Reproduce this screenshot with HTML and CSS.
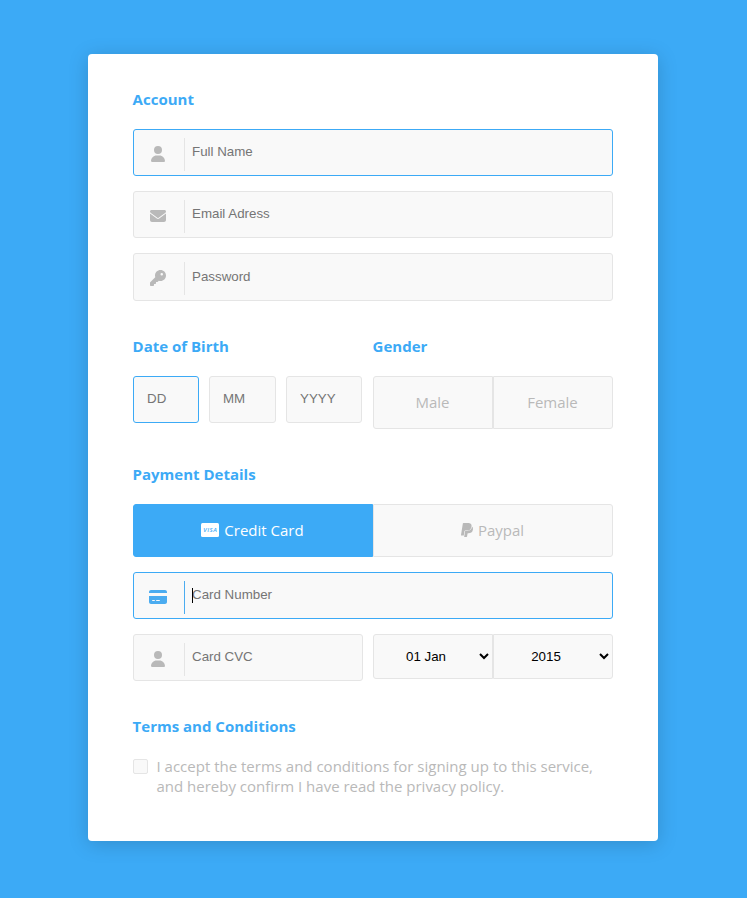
FILE: index.html
```html
<!DOCTYPE html>
<html lang="en">
<head>
<meta charset="utf-8">
<title>Sign up</title>
<link rel="stylesheet" href="styles.css">
</head>
<body>
<svg class="sprite" aria-hidden="true">
  <symbol id="user" viewBox="0 0 448 512"><path d="M224 256A128 128 0 1 0 224 0a128 128 0 1 0 0 256zm-45.700 48C79.800 304 0 383.800 0 482.300C0 498.700 13.300 512 29.700 512l388.600 0c16.400 0 29.700-13.300 29.700-29.700C448 383.800 368.200 304 269.700 304l-91.400 0z"/></symbol>
</svg>
<main class="card">
  <form>
    <section class="account">
      <h4>Account</h4>
      <div class="field active-border">
        <span class="icon"><svg width="14" height="16"><use href="#user"/></svg></span>
        <input type="text" placeholder="Full Name">
      </div>
      <div class="field">
        <span class="icon"><svg width="16" height="16" viewBox="0 0 512 512"><path d="M48 64C21.500 64 0 85.500 0 112c0 15.100 7.100 29.300 19.200 38.400L236.800 313.600c11.400 8.500 27 8.500 38.400 0L492.800 150.400c12.100-9.100 19.200-23.300 19.200-38.400c0-26.500-21.500-48-48-48L48 64zM0 176L0 384c0 35.300 28.700 64 64 64l384 0c35.300 0 64-28.700 64-64l0-208L294.400 339.200c-22.800 17.100-54 17.100-76.800 0L0 176z"/></svg></span>
        <input type="email" placeholder="Email Adress">
      </div>
      <div class="field tall">
        <span class="icon"><svg width="16" height="16" viewBox="0 0 512 512"><path d="M336 352c97.200 0 176-78.800 176-176S433.200 0 336 0S160 78.800 160 176c0 18.700 2.900 36.800 8.300 53.700L7 391c-4.500 4.500-7 10.600-7 17l0 80c0 13.300 10.700 24 24 24l80 0c13.300 0 24-10.700 24-24l0-40 40 0c13.300 0 24-10.700 24-24l0-40 40 0c6.400 0 12.500-2.500 17-7l33.300-33.300c16.900 5.400 35 8.300 53.700 8.300zM376 96a40 40 0 1 1 0 80 40 40 0 1 1 0-80z"/></svg></span>
        <input type="password" placeholder="Password">
      </div>
    </section>

    <section class="halves">
      <div>
        <h4>Date of Birth</h4>
        <div class="birth">
          <input class="active-border" type="text" placeholder="DD">
          <input type="text" placeholder="MM">
          <input type="text" placeholder="YYYY">
        </div>
      </div>
      <div>
        <h4>Gender</h4>
        <div class="switch">
          <label>Male</label>
          <label>Female</label>
        </div>
      </div>
    </section>

    <section class="payment">
      <h4>Payment Details</h4>
      <div class="switch methods">
        <label class="selected"><svg width="18" height="16" viewBox="0 0 18 16"><rect y="1" width="18" height="14" rx="1.500" fill="#fff"/><text class="visa" x="9" y="10.200" text-anchor="middle" textLength="13.500">VISA</text></svg><span>Credit Card</span></label>
        <label><svg width="12" height="16" viewBox="0 0 384 512"><path d="M111.400 295.900c-3.500 19.200-17.400 108.700-21.500 134-.300 1.800-1 2.500-3 2.500H12.300c-7.600 0-13.100-6.600-12.100-13.900L58.800 46.600c1.500-9.600 10.100-16.900 20-16.900 152.300 0 165.100-3.700 204 11.400 60.100 23.300 65.600 79.500 44 140.300-21.500 62.600-72.500 89.500-140.100 90.300-43.400.700-69.500-7-75.300 24.200zM357.100 152c-1.800-1.300-2.500-1.800-3 1.300-2 11.400-5.100 22.500-8.800 33.600-39.900 113.800-150.500 103.900-204.500 103.900-6.100 0-10.100 3.300-10.900 9.400-22.600 140.400-27.100 169.700-27.100 169.700-1 7.100 3.500 12.900 10.600 12.900h63.500c8.600 0 15.700-6.300 17.400-14.900.700-5.400-1.100 6.100 14.400-91.300 4.600-22 14.300-19.700 29.300-19.700 71 0 126.400-28.800 142.900-112.300 6.500-34.800 4.600-71.400-23.800-92.600z"/></svg><span>Paypal</span></label>
      </div>
      <div class="field active-border focused">
        <span class="icon"><svg width="18" height="16" viewBox="0 0 576 512"><path d="M64 32C28.700 32 0 60.700 0 96l0 32 576 0 0-32c0-35.300-28.700-64-64-64L64 32zM576 224L0 224 0 416c0 35.300 28.700 64 64 64l448 0c35.300 0 64-28.700 64-64l0-192zM112 352l64 0c8.800 0 16 7.200 16 16s-7.200 16-16 16l-64 0c-8.800 0-16-7.200-16-16s7.200-16 16-16zm112 16c0-8.800 7.200-16 16-16l96 0c8.800 0 16 7.200 16 16s-7.200 16-16 16l-96 0c-8.800 0-16-7.200-16-16z"/></svg></span>
        <input type="text" placeholder="Card Number">
        <i class="caret"></i>
      </div>
      <div class="halves">
        <div class="field cvc">
          <span class="icon"><svg width="14" height="16"><use href="#user"/></svg></span>
          <input type="text" placeholder="Card CVC">
        </div>
        <div class="expiry">
          <select><option>01 Jan</option></select>
          <select><option>2015</option></select>
        </div>
      </div>
    </section>

    <section class="terms">
      <h4>Terms and Conditions</h4>
      <label class="accept"><span class="box"></span><span>I accept the terms and conditions for signing up to this service, and hereby confirm I have read the privacy policy.</span></label>
    </section>
  </form>
</main>
</body>
</html>
```
FILE: styles.css
```css
* { box-sizing: border-box; }

body {
  margin: 0;
  padding: 54px 0 57px 88px;
  background: #3caaf6;
  color: #b9b9b9;
  font: 15px/20px "Open Sans", sans-serif;
}

.sprite { display: none; }

.card {
  width: 570px;
  height: 787px;
  padding: 35px 45px;
  background: #fff;
  border-radius: 4px;
  box-shadow: 0 3px 20px rgba(0, 0, 0, 0.17);
}

h4 {
  margin: 0 0 20px;
  color: #3caaf6;
  font-size: 15px;
  font-weight: 700;
  line-height: 20px;
  text-indent: -0.4px;
}

svg { fill: currentColor; }

.account { height: 247px; }

.halves { display: grid; grid-template-columns: 240px 240px; }

.payment { height: 252px; margin-top: 35px; }

.field {
  position: relative;
  display: flex;
  height: 47px;
  margin-bottom: 15px;
  background: #f9f9f9;
  border: 1px solid #e5e5e5;
  border-radius: 3px;
}

.field.tall { height: 48px; }
.field.tall input { padding-bottom: 2px; }

.icon {
  display: flex;
  align-items: center;
  justify-content: center;
  width: 51px;
  height: 33px;
  margin-top: 8px;
  padding: 0 2px 1px 0;
  border-right: 1px solid #e5e5e5;
}

input, select {
  font: 13.333px "Liberation Sans", Arial, sans-serif;
  border-radius: 3px;
  outline: 0;
}

.field input {
  flex: 1;
  min-width: 0;
  padding: 0 7px 2px;
  background: none;
  border: 0;
}

.field.active-border, .birth .active-border { border-color: #3caaf6; }
.focused .icon { color: #4bacf0; border-color: #4bacf0; }

.caret {
  position: absolute;
  left: 58px;
  top: 15px;
  width: 1px;
  height: 15px;
  background: #000;
}

.birth {
  display: grid;
  grid-template-columns: 66px 67px 76px;
  gap: 10px;
}

.birth input {
  width: 100%;
  height: 47px;
  padding: 0 13px 2px;
  background: #f9f9f9;
  border: 1px solid #e5e5e5;
}

.switch { display: flex; width: 240px; }

.switch label {
  flex: 1;
  display: flex;
  align-items: center;
  justify-content: center;
  gap: 5px;
  height: 53px;
  padding: 0 1px 2px 0;
  background: #f9f9f9;
  border: 1px solid #e5e5e5;
}

.switch label:first-child { border-radius: 3px 0 0 3px; }
.switch label:last-child { border-radius: 0 3px 3px 0; }

.methods { width: 480px; margin-bottom: 15px; }

.switch .selected {
  color: #fff;
  background: #3caaf6;
  border-color: #3caaf6;
}

.visa {
  fill: #3caaf6;
  font: italic 6px "Open Sans", sans-serif;
  font-weight: 600;
}

.cvc { width: 230px; }

.expiry { display: flex; }

select {
  width: 120px;
  height: 45px;
  padding-right: 2px;
  color: #000;
  background: #f9f9f9;
  border: 1px solid #e5e5e5;
  text-align: center;
}

select:first-child { border-radius: 3px 0 0 3px; }
select:last-child { border-radius: 0 3px 3px 0; }

.accept { display: flex; gap: 8.5px; }

.box {
  flex: none;
  width: 15px;
  height: 15px;
  margin-top: 3px;
  background: #f9f9f9;
  border: 1px solid #e5e5e5;
  border-radius: 2px;
}
```
